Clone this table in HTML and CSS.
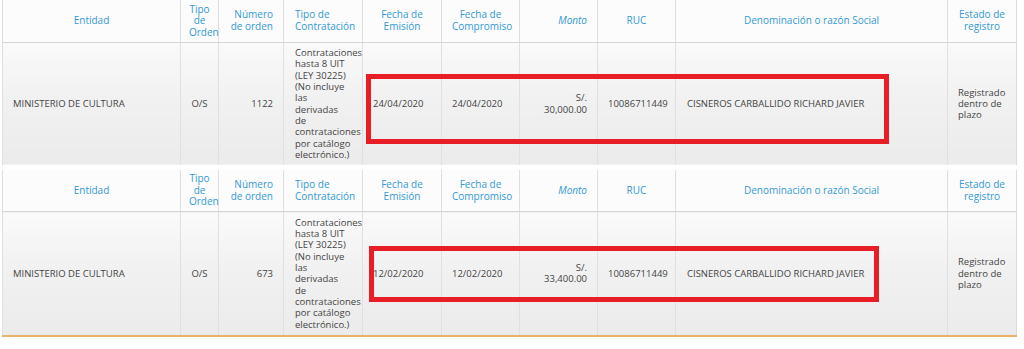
FILE: index.html
```html
<!DOCTYPE html>
<html lang="es">
<head>
<meta charset="utf-8">
<title>Órdenes</title>
<link rel="stylesheet" href="styles.css">
</head>
<body>
<div class="page">
  <div class="block">
    <table class="grid">
      <colgroup>
        <col class="w-ent"><col class="w-tipo"><col class="w-num"><col class="w-cont">
        <col class="w-fe"><col class="w-fc"><col class="w-mon"><col class="w-ruc">
        <col class="w-den"><col class="w-est">
      </colgroup>
      <thead>
        <tr>
          <th class="h-c">Entidad</th>
          <th class="h-c h-narrow">Tipo de Orden</th>
          <th class="h-r">Número de orden</th>
          <th class="h-l">Tipo de Contratación</th>
          <th class="h-c">Fecha de Emisión</th>
          <th class="h-c">Fecha de Compromiso</th>
          <th class="h-r h-sort">Monto</th>
          <th class="h-c">RUC</th>
          <th class="h-c">Denominación o razón Social</th>
          <th class="h-c">Estado de registro</th>
        </tr>
      </thead>
      <tbody>
        <tr>
          <td class="d-l">MINISTERIO DE CULTURA</td>
          <td class="d-c">O/S</td>
          <td class="d-r">1122</td>
          <td class="d-cont">Contrataciones<br>hasta 8 UIT<br>(LEY 30225)<br>(No incluye<br>las<br>derivadas<br>de<br>contrataciones<br>por catálogo<br>electrónico.)</td>
          <td class="d-l">24/04/2020</td>
          <td class="d-l">24/04/2020</td>
          <td class="d-r d-money">S/. 30,000.00</td>
          <td class="d-c">10086711449</td>
          <td class="d-l d-wide">CISNEROS CARBALLIDO RICHARD JAVIER</td>
          <td class="d-l">Registrado dentro de plazo</td>
        </tr>
      </tbody>
    </table>
    <div class="mark mark-one"></div>
  </div>

  <div class="block block-last">
    <table class="grid grid-last">
      <colgroup>
        <col class="w-ent"><col class="w-tipo"><col class="w-num"><col class="w-cont">
        <col class="w-fe"><col class="w-fc"><col class="w-mon"><col class="w-ruc">
        <col class="w-den"><col class="w-est">
      </colgroup>
      <thead>
        <tr>
          <th class="h-c">Entidad</th>
          <th class="h-c h-narrow">Tipo de Orden</th>
          <th class="h-r">Número de orden</th>
          <th class="h-l">Tipo de Contratación</th>
          <th class="h-c">Fecha de Emisión</th>
          <th class="h-c">Fecha de Compromiso</th>
          <th class="h-r h-sort">Monto</th>
          <th class="h-c">RUC</th>
          <th class="h-c">Denominación o razón Social</th>
          <th class="h-c">Estado de registro</th>
        </tr>
      </thead>
      <tbody>
        <tr>
          <td class="d-l">MINISTERIO DE CULTURA</td>
          <td class="d-c">O/S</td>
          <td class="d-r">673</td>
          <td class="d-cont">Contrataciones<br>hasta 8 UIT<br>(LEY 30225)<br>(No incluye<br>las<br>derivadas<br>de<br>contrataciones<br>por catálogo<br>electrónico.)</td>
          <td class="d-l">12/02/2020</td>
          <td class="d-l">12/02/2020</td>
          <td class="d-r d-money">S/. 33,400.00</td>
          <td class="d-c">10086711449</td>
          <td class="d-l d-wide">CISNEROS CARBALLIDO RICHARD JAVIER</td>
          <td class="d-l">Registrado dentro de plazo</td>
        </tr>
      </tbody>
    </table>
    <div class="mark mark-two"></div>
  </div>
</div>
</body>
</html>
```

FILE: styles.css
```css
html, body {
  margin: 0;
  padding: 0;
  background: #ffffff;
}

body {
  font-family: "Open Sans", "Noto Sans", sans-serif;
  color: #454545;
}

.page {
  display: flex;
  flex-direction: column;
  gap: 5px;
  padding-left: 2px;
  width: 1014px;
}

.block {
  position: relative;
}

.grid {
  width: 1014px;
  table-layout: fixed;
  border-collapse: collapse;
  border-left: 1px solid #dcdcdc;
  border-right: 1px solid #dcdcdc;
}

.grid-last {
  border-bottom: 2px solid #e9b46a;
}

.w-ent { width: 178px; }
.w-tipo { width: 38px; }
.w-num { width: 65px; }
.w-cont { width: 79px; }
.w-fe { width: 79px; }
.w-fc { width: 78px; }
.w-mon { width: 78px; }
.w-ruc { width: 78px; }
.w-den { width: 272px; }
.w-est { width: 69px; }

.grid th {
  height: 42px;
  padding: 0 10px;
  box-sizing: border-box;
  font-size: 10px;
  line-height: 11.5px;
  font-weight: normal;
  color: #3399d4;
  background: #fcfcfc;
  border-left: 1px solid #dedede;
  border-bottom: 1px solid #d6d6d6;
  vertical-align: middle;
  overflow: hidden;
}

.h-c { text-align: center; }
.h-r { text-align: right; }
.h-l { text-align: left; padding-left: 11px !important; }
.h-sort { font-style: italic; }
.grid th.h-narrow {
  padding: 0 8px;
  overflow: visible;
}

.grid td {
  padding: 4.5px 10px;
  font-size: 9.5px;
  line-height: 11.33px;
  color: #444444;
  background: linear-gradient(to bottom, #fafafa 0%, #f1f1f1 45%, #ebebeb 100%);
  border-left: 1px solid #e0e0e0;
  vertical-align: middle;
  overflow: hidden;
  white-space: normal;
}

.d-l { text-align: left; }
.d-c { text-align: center; }
.d-r { text-align: right; }
.d-cont {
  text-align: left;
  padding-left: 11px !important;
  white-space: nowrap !important;
}
.d-wide { padding-left: 11px !important; }
.d-money { padding-left: 16px !important; }

.mark {
  position: absolute;
  box-sizing: border-box;
  border: 5px solid #e81e27;
}

.mark-one {
  left: 364px;
  top: 74px;
  width: 523px;
  height: 70px;
}

.mark-two {
  left: 367px;
  top: 76px;
  width: 510px;
  height: 56px;
}
```
